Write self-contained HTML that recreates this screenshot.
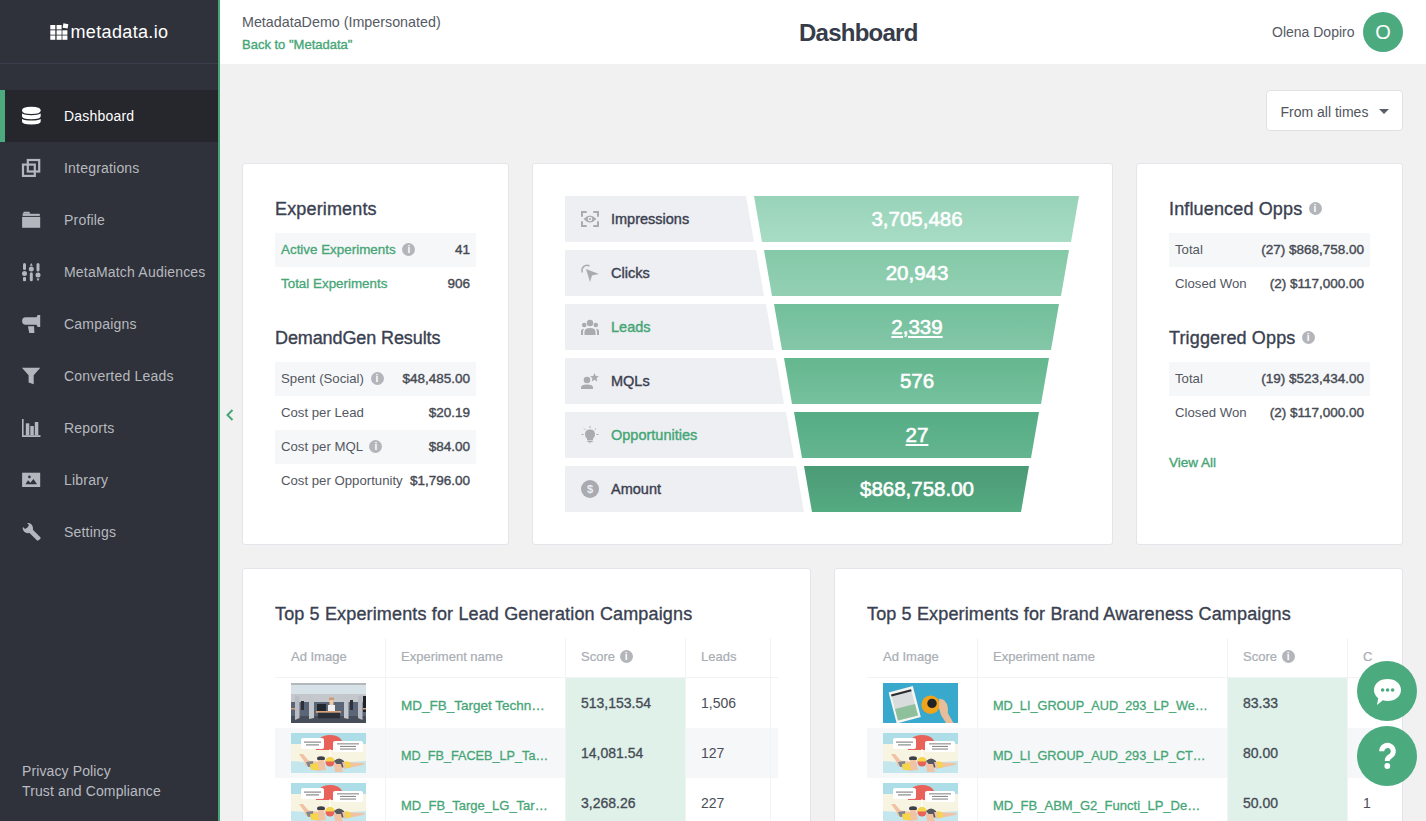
<!DOCTYPE html>
<html><head><meta charset="utf-8">
<style>
*{box-sizing:border-box;margin:0;padding:0}
html,body{width:1426px;height:821px;overflow:hidden;background:#f1f1f1;font-family:"Liberation Sans",sans-serif;color:#3a3f4b}
.abs{position:absolute}
#side{position:absolute;left:0;top:0;width:218px;height:821px;background:#2f323a}
#sideline{position:absolute;left:218px;top:0;width:2px;height:821px;background:#46a477}
#logo{position:absolute;left:0;top:0;width:218px;height:64px;border-bottom:1px solid #393f4d}
.nav{position:absolute;left:0;width:218px;height:52px;color:#b6b9bf;font-size:14px;letter-spacing:0.2px}
.nav .t{position:absolute;left:64px;top:18px;white-space:nowrap}
.nav .ic{position:absolute;left:22px;top:16px;width:19px;height:19px}
.nav.active{background:#25272d;color:#fff}
.nav.active:before{content:"";position:absolute;left:0;top:0;width:5px;height:52px;background:#4caa7f}
#header{position:absolute;left:220px;top:0;width:1206px;height:64px;background:#fff}
.card{position:absolute;background:#fff;border:1px solid #e3e5ea;border-radius:3px}
.green,.fl .lab.green{color:#46a676}
.ttl{position:absolute;font-size:18px;letter-spacing:0.15px;color:#3a4150;white-space:nowrap;-webkit-text-stroke-width:0.35px;margin-top:1px}
.row{position:absolute;height:34px;font-size:13.2px;color:#53575f;white-space:nowrap}
.row.bg{background:#f6f7f9}
.row .l{position:absolute;left:6px;top:8.7px}
.row .r{position:absolute;right:6px;top:9px;font-size:13.5px;color:#464a53;-webkit-text-stroke-width:0.4px}
.row .l.green{-webkit-text-stroke-width:0.3px;font-size:13.4px}
.m{-webkit-text-stroke-width:0.35px}
.info{display:inline-block;width:13px;height:13px;border-radius:50%;background:#b3b5ba;color:#fff;font-size:10px;font-weight:bold;font-style:normal;text-align:center;line-height:13px;vertical-align:1px;margin-left:3px;-webkit-text-stroke-width:0}
.gbar{position:absolute;height:46px}
.fl{position:absolute;left:565px;height:46px}
.fl .lab{position:absolute;left:46px;top:15px;font-size:14.5px;color:#3c4150;white-space:nowrap;-webkit-text-stroke-width:0.4px}
.fl svg{position:absolute;left:16px;top:15px}
.fv{position:absolute;width:330px;text-align:center;font-size:20.5px;color:#fff;margin-top:0px;white-space:nowrap;-webkit-text-stroke-width:0.6px}
.th{position:absolute;top:649px;font-size:13px;color:#a9adb4;white-space:nowrap;-webkit-text-stroke-width:0.2px}
.th .info{vertical-align:1px;margin-left:1px}
.tr{position:absolute;height:50px}
.tr.bg{background:#f6f7f9}
.td{position:absolute;height:50px;white-space:nowrap}
.td .thumb{position:absolute;left:0;top:5px}
.nm{position:absolute;top:19.5px;transform-origin:0 0;font-size:13.5px;color:#46a676;-webkit-text-stroke-width:0.3px}
.sc{position:absolute;top:17px;font-size:14px;color:#454a55;-webkit-text-stroke:0.3px #454a55}
.ld{position:absolute;top:17px;font-size:14px;color:#4a4e57}
table{border-collapse:collapse}
</style></head>
<body>
<svg width="0" height="0" style="position:absolute">
<defs>
<g id="beach">
  <rect width="75" height="40" fill="#f8f4e2"/>
  <rect width="75" height="11" fill="#addde6"/>
  <path d="M0 28 Q37 31 75 28 V40 H0Z" fill="#c4e7ee"/>
  <path d="M25 17 Q25 2 39 2 Q53 2 53 17Z" fill="#e8625a"/>
  <rect x="38.5" y="16" width="1" height="11" fill="#fff"/>
  <rect x="10" y="5" width="23" height="11" rx="2" fill="#fff"/>
  <rect x="13" y="8.5" width="17" height="1.2" fill="#8a8a8a"/><rect x="15" y="11.3" width="13" height="1.2" fill="#8a8a8a"/>
  <rect x="42" y="8" width="30" height="11" rx="2" fill="#fff"/>
  <rect x="46" y="10.3" width="22" height="1.1" fill="#8a8a8a"/><rect x="49" y="12.9" width="16" height="1.1" fill="#8a8a8a"/><rect x="49" y="15.5" width="16" height="1.1" fill="#8a8a8a"/>
  <path d="M8 21 L12 21 L18 28 L15 31Z" fill="#f1c3a5"/>
  <path d="M14 27 L28 29 L34 37 L26 38 L14 32Z" fill="#f1c3a5"/>
  <path d="M15 29 L22 28 L22 33 L17 34Z" fill="#7f868e"/>
  <path d="M19 31 L27 30 L28 37 L20 37Z" fill="#f5d54a"/>
  <ellipse cx="30" cy="25.5" rx="4" ry="2.2" fill="#3d3f48"/>
  <path d="M27 27 L33 27 L35 37 L28 37Z" fill="#f1c3a5"/>
  <circle cx="39" cy="29" r="4.5" fill="#e8625a"/>
  <path d="M34.5 28.5 A4.5 4.5 0 0 1 43.5 28.5Z" fill="#f5d54a"/>
  <path d="M43 28 Q48 23 53 28 L54 34 L49 35Z" fill="#55575f"/>
  <path d="M43 31 L50 31 L52 39 L44 39Z" fill="#f1c3a5"/>
  <path d="M51 29 L74 30 L72 32 L53 36Z" fill="#f1c3a5"/>
  <path d="M54 28 L59 29 L60 34 L55 35Z" fill="#f5d54a"/>
</g>
<g id="office">
  <rect width="75" height="40" fill="#c4c7cc"/>
  <rect x="0" y="2" width="75" height="9" fill="#d6e2e7"/>
  <rect x="0" y="0" width="75" height="2" fill="#b4b7bc"/>
  <rect x="0" y="19" width="75" height="16" fill="#5a6577"/>
  <rect x="0" y="33" width="75" height="7" fill="#474d59"/>
  <path d="M4 12 L8.5 13.5 L8.5 35 L4 37Z" fill="#b9bdc3"/>
  <path d="M18 11 L23 13 L23 35 L18 36Z" fill="#c3c6cb"/>
  <path d="M53 13 L57.5 11 L57.5 36 L53 35Z" fill="#c3c6cb"/>
  <path d="M67 13.5 L71.5 12 L71.5 37 L67 35Z" fill="#b9bdc3"/>
  <rect x="26" y="21" width="9" height="7" fill="#22262d"/>
  <rect x="38" y="14.5" width="5" height="3" fill="#c99c74"/>
  <rect x="38.5" y="17" width="4" height="5" fill="#efc9a8"/>
  <rect x="37" y="22" width="7" height="6" fill="#f0f0f0"/>
  <rect x="25" y="28" width="25" height="1.8" fill="#d9a47a"/>
  <rect x="27" y="29.8" width="22" height="5.5" fill="#2c3039"/>
  <rect x="10" y="18" width="3" height="9" fill="#2d3038"/>
  <rect x="59" y="17" width="3" height="10" fill="#2d3038"/>
  <rect x="72" y="13" width="3" height="16" fill="#1f2228"/>
  <rect x="0" y="25" width="4" height="1.5" fill="#d9a47a"/>
  <rect x="72" y="25" width="3" height="1.5" fill="#d9a47a"/>
</g>
<g id="tablet">
  <rect width="75" height="40" fill="#38a9cc"/>
  <path d="M5.6 9.5 L29.8 3.1 L37.8 34 L13.7 40.5Z" fill="#f6f5f0"/>
  <path d="M8 11.5 L28 6.3 L35 32.5 L15 37.6Z" fill="#d8dcdc"/>
  <path d="M8 11.5 L28 6.3 L28.6 8.2 L8.6 13.4Z" fill="#2a2c30"/>
  <path d="M12 26 L32 21 L35 32.5 L15 37.6Z" fill="#8fc09c"/>
  <circle cx="47.6" cy="21.8" r="9.2" fill="#f0a41c"/>
  <circle cx="49" cy="20.4" r="4.7" fill="#202226"/>
  <path d="M56.2 15.5 L61 17 L64 21 L65 26 L64.8 30 L70.5 40 L63 40 L58 32 L56 25Z" fill="#e8bd9a"/>
</g>
</defs></svg>
<div id="side">
  <div id="logo">
    <svg class="abs" style="left:50px;top:24px;overflow:visible" width="18" height="16" viewBox="0 0 18 16">
      <g fill="#fff">
        <rect x="0.3" y="1" width="5" height="4.4"/><rect x="6.6" y="1" width="5" height="4.4"/><rect x="13" y="-0.3" width="5" height="4.5" transform="rotate(10 15.5 2)"/>
        <rect x="0.3" y="6.3" width="5" height="4.4"/><rect x="6.6" y="6.3" width="5" height="4.4"/><rect x="12.4" y="6.3" width="5" height="4.4"/>
        <rect x="0.3" y="11.5" width="5" height="4.3"/><rect x="6.6" y="11.5" width="5" height="4.3"/><rect x="12.4" y="11.5" width="5" height="4.3"/>
      </g>
    </svg>
    <div class="abs" style="left:70.5px;top:22px;font-size:18px;letter-spacing:0.35px;color:#fff;white-space:nowrap">metadata.io</div>
  </div>
  <div class="nav active" style="top:90px"><svg class="ic" viewBox="0 0 19 19" style="overflow:visible"><g fill="#fff"><path d="M0 4.4Q0 0.8 9.35 0.8Q18.7 0.8 18.7 4.4Q18.7 7.9 9.35 7.9Q0 7.9 0 4.4Z"/><path d="M0 7.6Q3 9.2 9.35 9.2Q15.7 9.2 18.7 7.6V10.3Q18.7 13.2 9.35 13.2Q0 13.2 0 10.3Z"/><path d="M0 12.9Q3 14.4 9.35 14.4Q15.7 14.4 18.7 12.9V15.4Q18.7 18.4 9.35 18.4Q0 18.4 0 15.4Z"/></g></svg><span class="t">Dashboard</span></div>
  <div class="nav" style="top:142px"><svg class="ic" viewBox="0 0 19 19" style="overflow:visible"><g fill="none" stroke="#b3b6bc" stroke-width="2.2"><rect x="5.8" y="2" width="11.4" height="11.5"/><rect x="1" y="6.6" width="11.8" height="11.3"/></g></svg><span class="t">Integrations</span></div>
  <div class="nav" style="top:194px"><svg class="ic" viewBox="0 0 19 19" style="overflow:visible"><g fill="#b3b6bc"><path d="M0.8 3.8 L1.8 1.8 H7.3 L8.3 3.8Z"/><rect x="0.6" y="3.8" width="17.2" height="2.1"/><rect x="0.1" y="6.9" width="18.1" height="10.9"/></g></svg><span class="t">Profile</span></div>
  <div class="nav" style="top:246px"><svg class="ic" viewBox="0 0 19 19" style="overflow:visible"><g fill="#b3b6bc"><rect x="1" y="0.9" width="3" height="7" rx="1.5"/><circle cx="2.5" cy="11.5" r="2.5"/><rect x="1" y="15.1" width="3" height="4.1" rx="1"/><path d="M7.8 3.7 L9.3 0.9 L10.8 3.7Z"/><circle cx="9.3" cy="7.1" r="2.5"/><rect x="7.8" y="10.3" width="3" height="8.9" rx="1.5"/><rect x="14.5" y="0.9" width="3" height="8.6" rx="1.5"/><circle cx="16" cy="13" r="2.5"/><path d="M14.5 16.5 H17.5 L16 19.2Z"/></g></svg><span class="t">MetaMatch Audiences</span></div>
  <div class="nav" style="top:298px"><svg class="ic" viewBox="0 0 19 19" style="overflow:visible"><g fill="#b3b6bc"><path d="M0.1 6.9 Q0.1 3.2 3.6 3.2 H14.6 Q15 0.9 16.2 0.9 H18.2 V13 H16.2 Q15 13 14.6 10.7 H3.6 Q0.1 10.7 0.1 6.9Z"/><path d="M5.9 12.2 H12 L12.4 19 H7.3Z"/></g></svg><span class="t">Campaigns</span></div>
  <div class="nav" style="top:350px"><svg class="ic" viewBox="0 0 19 19" style="overflow:visible"><path fill="#b3b6bc" d="M-0.1 1.8 H18.3 L11.7 9.3 V18.2 L6.6 16.5 V9.3Z"/></svg><span class="t">Converted Leads</span></div>
  <div class="nav" style="top:402px"><svg class="ic" viewBox="0 0 19 19" style="overflow:visible"><g fill="#b3b6bc"><rect x="0" y="1" width="1.6" height="18"/><rect x="0" y="17.2" width="18.5" height="1.8"/><rect x="3.8" y="5.3" width="3.5" height="11.9"/><rect x="8.3" y="8" width="3.5" height="9.2"/><rect x="12.8" y="4" width="3.5" height="13.2"/></g></svg><span class="t">Reports</span></div>
  <div class="nav" style="top:454px"><svg class="ic" viewBox="0 0 19 19" style="overflow:visible"><rect x="0.1" y="2.7" width="18.1" height="14.3" fill="#b3b6bc"/><path d="M3.5 14.3 L6 10.3 L8.4 12.7 L11.5 9.1 L15 14.3Z" fill="#2f323a"/><circle cx="7.4" cy="6.9" r="1.3" fill="#2f323a"/></svg><span class="t">Library</span></div>
  <div class="nav" style="top:506px"><svg class="ic" viewBox="0 0 19 19" style="overflow:visible"><g fill="#b3b6bc"><circle cx="5.9" cy="6.2" r="5.1"/><path d="M6 9.6 L9.4 6.2 L18.6 15.4 Q18.8 16.6 17.6 17.6 Q16.6 18.6 15.3 18.7Z"/></g><path d="M-1 3 L3 -1 L7 3 L5.4 5.6 L3 7Z" fill="#2f323a"/></svg><span class="t">Settings</span></div>
  <div class="abs" style="left:22px;top:761px;font-size:14px;letter-spacing:0.12px;color:#b9bcc2;line-height:20px;white-space:nowrap">Privacy Policy<br>Trust and Compliance</div>
</div>
<div id="sideline"></div>

<div id="header">
  <div class="abs" style="left:22px;top:14px;font-size:14.3px;color:#555a63;white-space:nowrap">MetadataDemo (Impersonated)</div>
  <div class="abs green m" style="left:22px;top:37px;font-size:13px;white-space:nowrap">Back to "Metadata"</div>
  <div class="abs" style="left:579px;top:19px;font-size:24px;font-weight:bold;letter-spacing:-0.75px;color:#363c4a;white-space:nowrap">Dashboard</div>
  <div class="abs" style="left:1052px;top:24px;font-size:14px;color:#555a63;white-space:nowrap">Olena Dopiro</div>
  <div class="abs" style="left:1143px;top:12px;width:40px;height:40px;border-radius:50%;background:#4caa7f;color:#fff;font-size:20px;text-align:center;line-height:40px">O</div>
</div>

<div class="abs" style="left:1266px;top:90px;width:137px;height:41px;background:#fff;border:1px solid #e0e2e6;border-radius:4px;font-size:14px;color:#50545c">
  <span class="abs" style="left:13.5px;top:12.5px;white-space:nowrap">From all times</span>
  <span class="abs" style="left:112px;top:18px;width:0;height:0;border-left:5px solid transparent;border-right:5px solid transparent;border-top:5px solid #5a5e66"></span>
</div>

<div class="abs" style="left:226px;top:409px;font-size:16px;line-height:0;color:#46a676">
<svg width="8" height="12" viewBox="0 0 8 12"><path d="M6.5 1 L1.5 6 L6.5 11" fill="none" stroke="#46a676" stroke-width="2"/></svg>
</div>

<!-- Card 1 -->
<div class="card" style="left:242px;top:163px;width:267px;height:382px"></div>
<div class="ttl" style="left:275px;top:198px">Experiments</div>
<div class="row bg" style="left:275px;top:233px;width:201px"><span class="l green">Active Experiments <i class="info">i</i></span><span class="r">41</span></div>
<div class="row" style="left:275px;top:267px;width:201px"><span class="l green">Total Experiments</span><span class="r">906</span></div>
<div class="ttl" style="left:275px;top:327px;letter-spacing:-0.1px">DemandGen Results</div>
<div class="row bg" style="left:275px;top:362px;width:201px"><span class="l">Spent (Social) <i class="info">i</i></span><span class="r">$48,485.00</span></div>
<div class="row" style="left:275px;top:396px;width:201px"><span class="l">Cost per Lead</span><span class="r">$20.19</span></div>
<div class="row bg" style="left:275px;top:430px;width:201px"><span class="l">Cost per MQL <i class="info">i</i></span><span class="r">$84.00</span></div>
<div class="row" style="left:275px;top:464px;width:201px"><span class="l">Cost per Opportunity</span><span class="r">$1,796.00</span></div>

<!-- Card 2 funnel -->
<div class="card" style="left:532px;top:163px;width:581px;height:382px"></div>
<svg class="abs" style="left:0;top:0" width="1426" height="821">
  <defs>
    <linearGradient id="g1" x1="0" y1="0" x2="0" y2="1"><stop offset="0" stop-color="#98d3b9"/><stop offset="1" stop-color="#a8dcc5"/></linearGradient>
    <linearGradient id="g2" x1="0" y1="0" x2="0" y2="1"><stop offset="0" stop-color="#84c9a8"/><stop offset="1" stop-color="#93d0b3"/></linearGradient>
    <linearGradient id="g3" x1="0" y1="0" x2="0" y2="1"><stop offset="0" stop-color="#72bf9b"/><stop offset="1" stop-color="#84c7a8"/></linearGradient>
    <linearGradient id="g4" x1="0" y1="0" x2="0" y2="1"><stop offset="0" stop-color="#64b78f"/><stop offset="1" stop-color="#76c19e"/></linearGradient>
    <linearGradient id="g5" x1="0" y1="0" x2="0" y2="1"><stop offset="0" stop-color="#55ad84"/><stop offset="1" stop-color="#64b590"/></linearGradient>
    <linearGradient id="g6" x1="0" y1="0" x2="0" y2="1"><stop offset="0" stop-color="#4b9a76"/><stop offset="1" stop-color="#55ab82"/></linearGradient>
  </defs>
  <g fill="#eeeff3">
    <path d="M565 196 H746 L754 242 H565Z"/>
    <path d="M565 250 H756 L764 296 H565Z"/>
    <path d="M565 304 H766 L774 350 H565Z"/>
    <path d="M565 358 H776 L784 404 H565Z"/>
    <path d="M565 412 H786 L794 458 H565Z"/>
    <path d="M565 466 H796 L804 512 H565Z"/>
  </g>
  <path fill="url(#g1)" d="M754 196 H1079 L1071 242 H762Z"/>
  <path fill="url(#g2)" d="M764 250 H1069 L1061 296 H772Z"/>
  <path fill="url(#g3)" d="M774 304 H1059 L1051 350 H782Z"/>
  <path fill="url(#g4)" d="M784 358 H1049 L1041 404 H792Z"/>
  <path fill="url(#g5)" d="M794 412 H1039 L1031 458 H802Z"/>
  <path fill="url(#g6)" d="M804 466 H1029 L1021 512 H812Z"/>
</svg>
<div class="fl" style="top:196px"><svg width="18" height="16" viewBox="0 0 18 16"><g fill="none" stroke="#a9abb0" stroke-width="2" stroke-linecap="round"><path d="M1 5V1H5"/><path d="M13 1H17V5"/><path d="M17 11V15H13"/><path d="M5 15H1V11"/></g><path d="M2.5 8Q9 1 15.5 8Q9 15 2.5 8Z" fill="#a9abb0"/><circle cx="9" cy="8" r="2.3" fill="#eeeff3"/><circle cx="9" cy="8" r="1" fill="#a9abb0"/></svg><span class="lab">Impressions</span></div>
<div class="fl" style="top:250px"><svg width="18" height="18" viewBox="0 0 18 18" style="top:14px"><path d="M1.5 8.5A5 5 0 0 1 8.5 2" fill="none" stroke="#a9abb0" stroke-width="1.5"/><path d="M5 5L18 10L11 11.5L9 18Z" fill="#a9abb0"/></svg><span class="lab">Clicks</span></div>
<div class="fl" style="top:304px"><svg width="18" height="16" viewBox="0 0 18 16"><g fill="#a9abb0"><circle cx="9" cy="4" r="3.2"/><circle cx="3.2" cy="6" r="2.3"/><circle cx="14.8" cy="6" r="2.3"/><path d="M3.5 16V13Q3.5 9 9 9Q14.5 9 14.5 13V16Z"/><path d="M0 16V12.5Q0 10 3 9.8Q2 11 2 13V16Z"/><path d="M18 16V12.5Q18 10 15 9.8Q16 11 16 13V16Z"/></g></svg><span class="lab green">Leads</span></div>
<div class="fl" style="top:358px"><svg width="18" height="16" viewBox="0 0 18 16"><g fill="#a9abb0"><circle cx="6" cy="7" r="3.3"/><path d="M0 16V14.5Q0 11.5 6 11.5Q12 11.5 12 14.5V16Z"/><path d="M13.5 0L14.8 2.9L17.9 3.2L15.6 5.3L16.2 8.4L13.5 6.8L10.8 8.4L11.4 5.3L9.1 3.2L12.2 2.9Z"/></g></svg><span class="lab">MQLs</span></div>
<div class="fl" style="top:412px"><svg width="18" height="18" viewBox="0 0 18 18" style="top:14px"><g fill="#a9abb0"><path d="M9 3.5Q14 3.5 14 8.5Q14 11 12 12.5V14H6V12.5Q4 11 4 8.5Q4 3.5 9 3.5Z"/><rect x="6.3" y="14.6" width="5.4" height="1.4"/><path d="M7.5 16.6H10.5L9 17.6Z"/></g><g stroke="#a9abb0" stroke-width="1"><path d="M9 0V2"/><path d="M3 2.5L4.3 3.8"/><path d="M15 2.5L13.7 3.8"/><path d="M0.5 8.5H2.5"/><path d="M15.5 8.5H17.5"/></g></svg><span class="lab green">Opportunities</span></div>
<div class="fl" style="top:466px"><svg width="18" height="18" viewBox="0 0 18 18" style="top:14px"><circle cx="9" cy="9" r="9" fill="#a9abb0"/><text x="9" y="13" font-family="Liberation Sans" font-size="11" font-weight="bold" fill="#eeeff3" text-anchor="middle">$</text></svg><span class="lab">Amount</span></div>
<div class="fv" style="left:752px;top:207px">3,705,486</div>
<div class="fv" style="left:752px;top:261px">20,943</div>
<div class="fv" style="left:752px;top:315px;text-decoration:underline">2,339</div>
<div class="fv" style="left:752px;top:369px">576</div>
<div class="fv" style="left:752px;top:423px;text-decoration:underline">27</div>
<div class="fv" style="left:752px;top:477px">$868,758.00</div>

<!-- Card 3 -->
<div class="card" style="left:1136px;top:163px;width:267px;height:382px"></div>
<div class="ttl" style="left:1169px;top:198px">Influenced Opps <i class="info" style="vertical-align:3px;margin-left:1px">i</i></div>
<div class="row bg" style="left:1169px;top:233px;width:201px"><span class="l">Total</span><span class="r">(27) $868,758.00</span></div>
<div class="row" style="left:1169px;top:267px;width:201px"><span class="l">Closed Won</span><span class="r">(2) $117,000.00</span></div>
<div class="ttl" style="left:1169px;top:327px">Triggered Opps <i class="info" style="vertical-align:3px;margin-left:1px">i</i></div>
<div class="row bg" style="left:1169px;top:362px;width:201px"><span class="l">Total</span><span class="r">(19) $523,434.00</span></div>
<div class="row" style="left:1169px;top:396px;width:201px"><span class="l">Closed Won</span><span class="r">(2) $117,000.00</span></div>
<div class="abs green m" style="left:1169px;top:455px;font-size:13.5px">View All</div>

<!-- Card 4 -->
<div class="card" style="left:242px;top:568px;width:569px;height:300px"></div>
<div class="ttl" style="left:275px;top:603px">Top 5 Experiments for Lead Generation Campaigns</div>
<!-- TABLE1 -->
<div class="tr bg" style="left:275px;top:728px;width:503px"></div>
<div class="abs" style="left:565px;top:678px;width:120px;height:143px;background:#dff1e8"></div>
<div class="abs" style="left:275px;top:677px;width:503px;height:1px;background:#f0f2f4"></div>
<div class="abs" style="left:385px;top:638px;width:1px;height:183px;background:#f1f3f5"></div>
<div class="abs" style="left:565px;top:638px;width:1px;height:183px;background:#f1f3f5"></div>
<div class="abs" style="left:685px;top:638px;width:1px;height:183px;background:#f1f3f5"></div>
<div class="abs" style="left:770px;top:638px;width:1px;height:183px;background:#f1f3f5"></div>
<div class="th" style="left:291px">Ad Image</div>
<div class="th" style="left:401px">Experiment name</div>
<div class="th" style="left:581px">Score <i class="info">i</i></div>
<div class="th" style="left:701px">Leads</div>
<div class="td" style="left:291px;top:678px"><svg class="thumb" width="75" height="40"><use href="#office"/></svg></div>
<div class="td" style="left:401px;top:678px"><span class="nm">MD_FB_Target Techn…</span></div>
<div class="td" style="left:581px;top:678px"><span class="sc">513,153.54</span></div>
<div class="td" style="left:701px;top:678px"><span class="ld">1,506</span></div>
<div class="td" style="left:291px;top:728px"><svg class="thumb" width="75" height="40"><use href="#beach"/></svg></div>
<div class="td" style="left:401px;top:728px"><span class="nm" style="transform:scaleX(0.938)">MD_FB_FACEB_LP_Ta…</span></div>
<div class="td" style="left:581px;top:728px"><span class="sc">14,081.54</span></div>
<div class="td" style="left:701px;top:728px"><span class="ld">127</span></div>
<div class="td" style="left:291px;top:778px"><svg class="thumb" width="75" height="40"><use href="#beach"/></svg></div>
<div class="td" style="left:401px;top:778px"><span class="nm" style="transform:scaleX(0.963)">MD_FB_Targe_LG_Tar…</span></div>
<div class="td" style="left:581px;top:778px"><span class="sc">3,268.26</span></div>
<div class="td" style="left:701px;top:778px"><span class="ld">227</span></div>
<!-- /TABLE1 -->

<!-- Card 5 -->
<div class="card" style="left:834px;top:568px;width:569px;height:300px"></div>
<div class="ttl" style="left:867px;top:603px">Top 5 Experiments for Brand Awareness Campaigns</div>
<!-- TABLE2 -->
<div class="tr bg" style="left:867px;top:728px;width:534px"></div>
<div class="abs" style="left:1227px;top:678px;width:120px;height:143px;background:#dff1e8"></div>
<div class="abs" style="left:867px;top:677px;width:534px;height:1px;background:#f0f2f4"></div>
<div class="abs" style="left:977px;top:638px;width:1px;height:183px;background:#f1f3f5"></div>
<div class="abs" style="left:1227px;top:638px;width:1px;height:183px;background:#f1f3f5"></div>
<div class="abs" style="left:1347px;top:638px;width:1px;height:183px;background:#f1f3f5"></div>
<div class="th" style="left:883px">Ad Image</div>
<div class="th" style="left:993px">Experiment name</div>
<div class="th" style="left:1243px">Score <i class="info">i</i></div>
<div class="th" style="left:1363px">C</div>
<div class="td" style="left:883px;top:678px"><svg class="thumb" width="75" height="40"><use href="#tablet"/></svg></div>
<div class="td" style="left:993px;top:678px"><span class="nm" style="transform:scaleX(0.942)">MD_LI_GROUP_AUD_293_LP_We…</span></div>
<div class="td" style="left:1243px;top:678px"><span class="sc">83.33</span></div>
<div class="td" style="left:883px;top:728px"><svg class="thumb" width="75" height="40"><use href="#beach"/></svg></div>
<div class="td" style="left:993px;top:728px"><span class="nm" style="transform:scaleX(0.941)">MD_LI_GROUP_AUD_293_LP_CT…</span></div>
<div class="td" style="left:1243px;top:728px"><span class="sc">80.00</span></div>
<div class="td" style="left:883px;top:778px"><svg class="thumb" width="75" height="40"><use href="#beach"/></svg></div>
<div class="td" style="left:993px;top:778px"><span class="nm" style="transform:scaleX(0.966)">MD_FB_ABM_G2_Functi_LP_De…</span></div>
<div class="td" style="left:1243px;top:778px"><span class="sc">50.00</span></div>
<div class="td" style="left:1363px;top:778px"><span class="ld">1</span></div>
<!-- /TABLE2 -->

<!-- floating -->
<div class="abs" style="left:1357px;top:661px;width:60px;height:60px;border-radius:50%;background:#4caa7f"><svg class="abs" style="left:15px;top:17px" width="30" height="28" viewBox="0 0 30 28"><path d="M15.5 1C23.5 1 29 5.8 29 12C29 18.2 23.5 23 15.5 23C13.8 23 12.2 22.8 10.8 22.3L5 27L6.2 20.2C3.5 18.2 2 15.3 2 12C2 5.8 7.5 1 15.5 1Z" fill="#fff"/><circle cx="10.6" cy="12" r="1.8" fill="#4caa7f"/><circle cx="15.6" cy="12" r="1.8" fill="#4caa7f"/><circle cx="20.6" cy="12" r="1.8" fill="#4caa7f"/></svg></div>
<div class="abs" style="left:1357px;top:726px;width:60px;height:60px;border-radius:50%;background:#4caa7f"><svg class="abs" style="left:13px;top:12px" width="34" height="34" viewBox="0 0 34 34"><path d="M11.7 13.2A5.8 5.8 0 1 1 20.5 18.2Q17.3 19.8 17.3 22.3V23" fill="none" stroke="#fff" stroke-width="5"/><circle cx="17.3" cy="28" r="2.9" fill="#fff"/></svg></div>
</body></html>
